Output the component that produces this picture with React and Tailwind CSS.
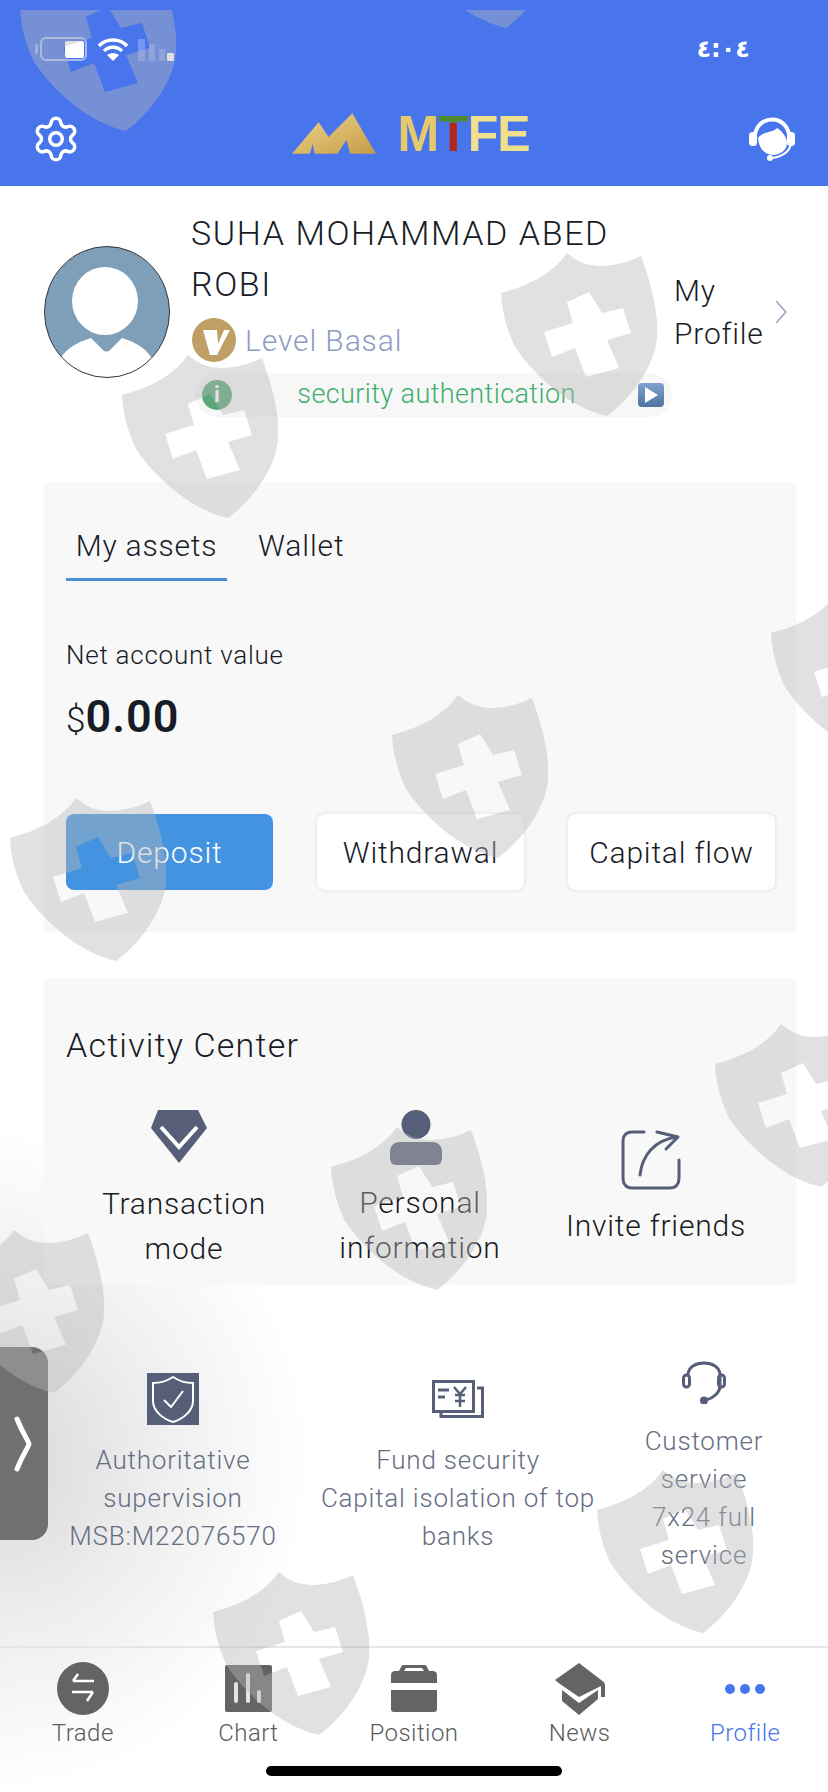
import { Settings } from 'lucide-react';

const font = { fontFamily: '"Roboto", "Liberation Sans", sans-serif' };

// watermark positions, measured off the screenshot
const shields = [
  { left: 20, top: -32 },
  { left: 400, top: -135 },
  { left: 501, top: 253 },
  { left: 122, top: 355 },
  { left: 392, top: 695 },
  { left: 771, top: 593 },
  { left: 10, top: 798 },
  { left: 715, top: 1024 },
  { left: 331, top: 1127 },
  { left: -52, top: 1230 },
  { left: 597, top: 1470 },
  { left: 213, top: 1572 },
];

function Shield({ left, top }) {
  return (
    <svg
      viewBox="0 0 156 163"
      width="156"
      height="163"
      className="absolute"
      style={{ left, top: top - 10 }}
    >
      <path
        fill="#b8b8b8"
        fillOpacity="0.42"
        fillRule="evenodd"
        d="M66 0Q82 14 101 13Q122 12 140 3C150 30 158 60 156 85C153 115 130 145 106 163C70 155 35 125 14 94C5 75 1 58 0 40C30 32 52 20 66 0ZM66 49L72 70L43 79L51 104L74 95L85 124L118 115L106 87L130 80L122 55L101 60L88 39Z"
      />
    </svg>
  );
}

function StatusBar() {
  return (
    <div className="flex items-center justify-between h-[30px] pl-[35px] pr-[78px]">
      <div className="flex items-center">
        <svg width="4" height="10" viewBox="0 0 4 10" className="mr-[1px]">
          <rect width="3" height="10" rx="1.500" fill="#fff" fillOpacity="0.4" />
        </svg>
        <div className="w-[47px] h-[24px] border-2 border-white/50 rounded-[6px] flex justify-end items-center pr-[1px]">
          <div className="w-[19px] h-[17px] bg-white rounded-[2px]"></div>
        </div>
        <svg width="32" height="24" viewBox="0 0 32 24" className="ml-[10px]" fill="none" stroke="#fff" strokeWidth="3.500">
          <path d="M2 9C9 1 23 1 30 9" />
          <path d="M7 14C12 9 20 9 25 14" />
          <path d="M16 24L10 18C13 15.500 19 15.500 22 18Z" fill="#fff" stroke="none" />
        </svg>
        <div className="flex items-end gap-[4px] ml-[9px] h-[24px]">
          <div className="w-[7px] h-[22px] bg-white/25 rounded-[1px]"></div>
          <div className="w-[6px] h-[17px] bg-white/25 rounded-[1px]"></div>
          <div className="w-[6px] h-[12px] bg-white/25 rounded-[1px]"></div>
          <div className="w-[7px] h-[8px] bg-white -ml-[2px] rounded-[1px]"></div>
        </div>
      </div>
      <span dir="rtl" className="text-white text-[24px] font-bold leading-none tracking-[-3px]" style={{ fontFamily: '"DejaVu Sans", sans-serif' }}>٤:٠٤</span>
    </div>
  );
}

function Logo() {
  return (
    <div className="flex items-start gap-[21px] mr-[8px] -mt-[1px]">
      <svg width="84" height="41" viewBox="0 0 85 41">
        <defs>
          <linearGradient id="gold" x1="0" x2="1" y1="0" y2="1">
            <stop offset="0" stopColor="#f0d98a" />
            <stop offset="1" stopColor="#c49a48" />
          </linearGradient>
        </defs>
        <path d="M0 41L27 9L37 24L61 0L85 41H59L55 27L46 41H23L21 31L18 41Z" fill="url(#gold)" />
      </svg>
      <div className="-mt-[4px] text-[50px] leading-none font-bold tracking-[-1px]" style={{ fontFamily: '"Liberation Sans", sans-serif' }}>
        <span className="text-[#e5c96c]">M</span>
        <span className="bg-[linear-gradient(#4f8a2c_0_30%,#b3261e_30%)] bg-clip-text text-transparent">T</span>
        <span className="text-[#f0e08c]">FE</span>
      </div>
    </div>
  );
}

function SupportIcon() {
  return (
    <svg width="46" height="44" viewBox="0 0 46 44" className="mt-[3px]">
      <path d="M5.500 22C5.500 -4 40.500 -4 40.500 22" fill="none" stroke="#fff" strokeWidth="4" />
      <rect x="0" y="15" width="8" height="14" rx="3.500" fill="#fff" />
      <rect x="38" y="15" width="8" height="14" rx="3.500" fill="#fff" />
      <path d="M9 21C14 14 24 16 28 11C33 14 38 20 38 26C38 34 30 38 24 38C16 38 10 32 9 21Z" fill="#fff" />
      <path d="M42 27C40 36 32 40 22 41" fill="none" stroke="#fff" strokeWidth="2" />
      <circle cx="21" cy="41" r="3" fill="#fff" />
    </svg>
  );
}

function Avatar() {
  return (
    <svg width="126" height="132" viewBox="0 0 126 132" className="shrink-0">
      <defs>
        <clipPath id="avatar-clip">
          <ellipse cx="63" cy="66" rx="62.500" ry="65.500" />
        </clipPath>
      </defs>
      <g clipPath="url(#avatar-clip)">
        <rect width="126" height="132" fill="#7f9fb9" />
        <ellipse cx="61" cy="55" rx="33" ry="34" fill="#fff" />
        <path d="M10 132C12 108 28 98 47 92L59 104C61 106 64 106 66 104L78 92C97 98 112 108 114 132Z" fill="#fff" />
      </g>
      <ellipse cx="63" cy="66" rx="62.500" ry="65.500" fill="none" stroke="#33363d" strokeWidth="1" />
    </svg>
  );
}

function Profile() {
  return (
    <div className="flex items-center pl-[44px] h-[252px]">
      <Avatar />
      <div className="w-[481px] ml-[21px]">
        <div className="text-[34px] leading-[51px] tracking-[1.600px] text-[#181c26] font-light">SUHA MOHAMMAD ABED<br />ROBI</div>
        <div className="flex items-center mt-[8px] ml-[1px]">
          <svg width="44" height="44" viewBox="0 0 44 44">
            <circle cx="22" cy="22" r="22" fill="#bf9f66" />
            <path d="M11 12H25L26 26L32 12H38L25 37H18Z" fill="#fff" />
          </svg>
          <span className="ml-[9px] text-[30px] tracking-[0.900px] text-[#8e9cc4] font-light">Level Basal</span>
        </div>
        <div className="flex items-center h-[44px] mt-[10px] bg-[#f7f7f7] rounded-full pl-[7px] pr-[8px] ml-[4px]">
          <div className="w-[30px] h-[30px] rounded-full bg-[#58a87a] flex items-center justify-center text-white font-bold text-[22px]">i</div>
          <span className="flex-1 text-center text-[27px] tracking-[0.400px] text-[#3fae6f] font-light pl-[3px]">security authentication</span>
          <svg width="26" height="24" viewBox="0 0 26 24">
            <defs>
              <linearGradient id="play" x1="0" x2="0" y1="0" y2="1">
                <stop offset="0" stopColor="#7fa3d0" />
                <stop offset="1" stopColor="#4f729f" />
              </linearGradient>
            </defs>
            <rect width="26" height="24" rx="4" fill="url(#play)" />
            <path d="M7 4L20 12L7 20Z" fill="#fff" />
          </svg>
        </div>
      </div>
      <div className="w-[90px] ml-[2px] text-[30px] leading-[43px] tracking-[0.800px] text-[#181c26] font-light">My Profile</div>
      <svg width="12" height="24" viewBox="0 0 12 24" className="ml-[11px]" fill="none" stroke="#8e9cc4" strokeWidth="1.300">
        <path d="M1 1L11 12L1 23" />
      </svg>
    </div>
  );
}

function Assets() {
  const buttons = ['Withdrawal', 'Capital flow'];
  return (
    <div className="ml-[44px] mr-[32px] mt-[44px] bg-[#f8f8f8] rounded-[6px] h-[450px] px-[22px]">
      <div className="flex pt-[39px] h-[98px]">
        <div className="w-[161px] text-center text-[30px] leading-[50px] tracking-[0.800px] text-[#181c26] font-light border-b-[3px] border-[#4a90d9] h-[60px]">My assets</div>
        <div className="ml-[31px] text-[30px] leading-[50px] tracking-[0.900px] text-[#181c26] font-light">Wallet</div>
      </div>
      <div className="mt-[57px] text-[26px] leading-[36px] tracking-[0.750px] text-[#181c26] font-light">Net account value</div>
      <div className="mt-[19px] flex items-baseline text-[#181c26] leading-[50px]">
        <span className="text-[35px] font-light">$</span>
        <span className="text-[45px] font-semibold tracking-[1px]">0.00</span>
      </div>
      <div className="flex justify-between mt-[68px] -mr-[1px]">
        <div className="w-[207px] h-[76px] bg-[#4393e0] rounded-[8px] flex items-center justify-center text-white text-[30px] tracking-[0.800px] font-light">Deposit</div>
        {buttons.map(b => (
          <div key={b} className="w-[207px] h-[76px] bg-white rounded-[8px] shadow-[0_0_4px_rgba(0,0,0,0.12)] flex items-center justify-center text-[#181c26] text-[30px] tracking-[0.800px] font-light">{b}</div>
        ))}
      </div>
    </div>
  );
}

function ActivityCenter() {
  return (
    <div className="ml-[44px] mr-[32px] mt-[46px] bg-[#f8f8f8] rounded-[6px] h-[307px] px-[22px]">
      <div className="pt-[44px] text-[34px] leading-[46px] tracking-[1.200px] text-[#181c26] font-light">Activity Center</div>
      <div className="grid grid-cols-3 mt-[42px] text-center text-[30px] leading-[45px] tracking-[0.800px] text-[#181c26] font-light">
        <div className="flex flex-col items-center">
          <svg width="56" height="53" viewBox="0 0 56 53" fill="#565e78" className="mr-[10px]">
            <path d="M7 0H47L56 18L28 53L0 18Z" />
            <path d="M10 17L28 37L46 17" fill="none" stroke="#fff" strokeWidth="4" />
          </svg>
          <div className="mt-[18px] w-[200px]">Transaction mode</div>
        </div>
        <div className="flex flex-col items-center">
          <svg width="52" height="55" viewBox="0 0 52 55" fill="#565e78" className="mr-[8px]">
            <ellipse cx="26" cy="14.500" rx="14.500" ry="14.500" />
            <path d="M0 47V42C0 36 4 32 10 32H42C48 32 52 36 52 42V47C52 52 50 55 46 55H6C2 55 0 52 0 47Z" />
          </svg>
          <div className="mt-[15px] w-[200px]">Personal information</div>
        </div>
        <div className="flex flex-col items-center pt-[20px]">
          <svg width="60" height="60" viewBox="0 0 60 60" fill="none" stroke="#565e78" strokeWidth="3" strokeLinecap="round" strokeLinejoin="round" className="mr-[10px]">
            <path d="M23 2H11C5 2 2 6 2 11V48C2 54 5 58 11 58H49C55 58 58 54 58 48V30" />
            <path d="M19 45C21 26 33 10 56 7" />
            <path d="M36 2L57 7L45 19" />
          </svg>
          <div className="mt-[13px]">Invite friends</div>
        </div>
      </div>
    </div>
  );
}

function Features() {
  return (
    <div className="flex mt-[75px] h-[286px] text-[#666e82] text-[26px] leading-[38px] tracking-[0.800px] font-light text-center">
      <div className="w-[346px] flex flex-col items-center pt-[13px]">
        <svg width="52" height="52" viewBox="0 0 52 52">
          <rect width="52" height="52" fill="#565e78" />
          <path d="M26 4C20 8 13 10 6 10V28C6 38 16 46 26 49C36 46 46 38 46 28V10C39 10 32 8 26 4Z" fill="none" stroke="#fff" strokeWidth="2" />
          <path d="M17 27L24 34L36 18" fill="none" stroke="#fff" strokeWidth="2" />
        </svg>
        <div className="mt-[16px]">Authoritative<br />supervision<br />MSB:M22076570</div>
      </div>
      <div className="w-[224px] flex flex-col items-center pt-[20px]">
        <svg width="52" height="38" viewBox="0 0 52 38" fill="none" stroke="#565e78" strokeWidth="3">
          <rect x="1.500" y="1.500" width="40" height="30" />
          <path d="M45 8H50.500V36.500H9V33" />
          <path d="M6 10H17M6 17H13" />
          <path d="M22 7L28 14L34 7M28 14V27M23 15H33M23 21H33" strokeWidth="2.500" />
        </svg>
        <div className="mt-[23px] w-[300px]">Fund security<br />Capital isolation of top banks</div>
      </div>
      <div className="w-[258px] flex flex-col items-center pl-[10px]">
        <svg width="44" height="44" viewBox="0 0 44 44" fill="none" stroke="#565e78" strokeWidth="3">
          <path d="M6 15C6 -1 38 -1 38 15V26C38 32 32 38 24 40" />
          <rect x="1.500" y="15" width="6" height="12" rx="3" />
          <rect x="36.500" y="15" width="6" height="12" rx="3" />
          <circle cx="22" cy="40.500" r="2.500" fill="#565e78" />
        </svg>
        <div className="mt-[18px] w-[150px]">Customer service<br />7x24 full service</div>
      </div>
    </div>
  );
}

function TabIcon({ name }) {
  if (name === 'Trade') {
    return (
      <svg width="52" height="53" viewBox="0 0 52 53">
        <ellipse cx="26" cy="26.500" rx="26" ry="26.500" fill="#646464" />
        <path d="M16 19H37M21 12L16 19M15 30H36M36 30L30 39" stroke="#fff" strokeWidth="2.500" fill="none" />
      </svg>
    );
  }
  if (name === 'Chart') {
    return (
      <svg width="47" height="47" viewBox="0 0 47 47">
        <rect width="47" height="47" rx="2" fill="#646464" />
        <path d="M11 19V36M23 10V36M34 27V36" stroke="#e4e4e4" strokeWidth="4" strokeLinecap="round" />
      </svg>
    );
  }
  if (name === 'Position') {
    return (
      <svg width="46" height="47" viewBox="0 0 46 47" fill="#646464">
        <path d="M0 10C0 7 2 6 4 6H8L10 2C11 0 12 0 13 0H33C34 0 35 0 36 2L38 6H42C44 6 46 7 46 10V18H0ZM13 6H33L31 3H15Z" />
        <path d="M0 25H46V44C46 46 45 47 43 47H3C1 47 0 46 0 44Z" />
      </svg>
    );
  }
  if (name === 'News') {
    return (
      <svg width="50" height="52" viewBox="0 0 50 52" fill="#646464">
        <path d="M24 0L50 20L46 23L24 34L5 21L0 17Z" />
        <path d="M7 27L24 40L43 27V36L24 52L7 38Z" />
        <path d="M46 21H50V34H46Z" />
      </svg>
    );
  }
  return (
    <div className="h-[53px] flex items-center justify-center gap-[5px]">
      <div className="w-[10px] h-[10px] rounded-full bg-[#4874ec]"></div>
      <div className="w-[10px] h-[10px] rounded-full bg-[#4874ec]"></div>
      <div className="w-[10px] h-[10px] rounded-full bg-[#4874ec]"></div>
    </div>
  );
}

function TabBar() {
  const tabs = ['Trade', 'Chart', 'Position', 'News', 'Profile'];
  return (
    <div className="border-t-2 border-[#e6e6e6] h-[146px]">
      <div className="grid grid-cols-5 pt-[14px]">
        {tabs.map(tab => (
          <div key={tab} className="flex flex-col items-center">
            <div className="h-[53px] flex items-center">
              <TabIcon name={tab} />
            </div>
            <span className={`text-[24px] leading-[34px] mt-[1px] tracking-[0.450px] font-light ${tab === 'Profile' ? 'text-[#4874ec]' : 'text-[#5c5c5c]'}`}>{tab}</span>
          </div>
        ))}
      </div>
      <div className="w-[296px] h-[10px] bg-black rounded-full mx-auto mt-[16px]"></div>
    </div>
  );
}

export default function App() {
  return (
    <div
      className="relative w-[828px] h-[1792px] overflow-hidden bg-white bg-[radial-gradient(ellipse_310px_330px_at_0px_1460px,#d8d8d8_0%,#eeeeee_50%,#ffffff_100%)]"
      style={font}
    >
      <div className="h-[186px] pt-[34px] bg-[#4874ec]">
        <StatusBar />
        <div className="flex items-start justify-between pl-[31px] pr-[33px] mt-[50px]">
          <Settings size={50} strokeWidth={1.700} className="text-white" />
          <Logo />
          <SupportIcon />
        </div>
      </div>
      <Profile />
      <Assets />
      <ActivityCenter />
      <Features />
      <TabBar />

      {/* side drawer handle */}
      <div className="absolute left-0 top-[1347px] w-[48px] h-[193px] bg-[#707070] rounded-r-[16px] flex items-center">
        <svg width="20" height="56" viewBox="0 0 20 56" className="ml-[14px]" fill="none" stroke="#fff" strokeWidth="5" strokeLinecap="round">
          <path d="M3 3C9 18 14 24 15 28C14 32 9 38 3 53" />
        </svg>
      </div>

      {/* watermarks, cut off above the status bar */}
      <div className="absolute left-0 right-0 top-[10px] bottom-0 overflow-hidden pointer-events-none">
        {shields.map(s => (
          <Shield key={`${s.left}-${s.top}`} left={s.left} top={s.top} />
        ))}
      </div>
    </div>
  );
}
